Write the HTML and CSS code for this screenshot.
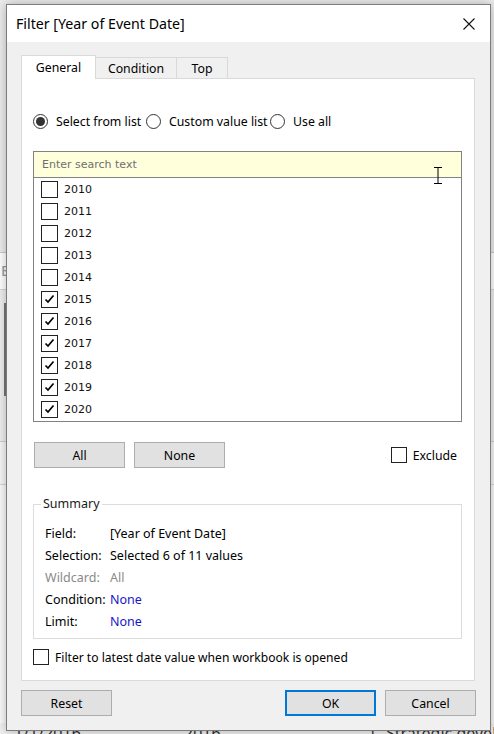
FILE: index.html
```html
<!DOCTYPE html>
<html lang="en">
<head>
<meta charset="utf-8">
<title>Filter [Year of Event Date]</title>
<link rel="stylesheet" href="styles.css">
</head>
<body>
<div class="app">
  <div class="band band-top"></div>
  <div class="band band-row"><span class="cut">E</span></div>
  <div class="band band-mid"><span class="bar"></span></div>
  <div class="band band-row2"></div>
  <div class="band band-low"></div>
  <div class="app-grid">
    <span>1/1/2016</span><span>2016</span><span class="num">1</span><span>Strategic development</span>
  </div>
</div>

<div class="dialog">
  <div class="titlebar">
    <span class="title">Filter [Year of Event Date]</span>
    <svg class="close" width="12" height="12" viewBox="0 0 12 12"><path d="M0.5 0.5 L11.5 11.5 M11.5 0.5 L0.5 11.5" stroke="#111" stroke-width="1.1" fill="none"/></svg>
  </div>
  <div class="client">
    <div class="tabs">
      <div class="tab active">General</div>
      <div class="tab">Condition</div>
      <div class="tab tab-top">Top</div>
    </div>
    <div class="panel">
      <div class="radios">
        <label class="radio r1"><span class="dot on"></span>Select from list</label>
        <label class="radio r2"><span class="dot"></span>Custom value list</label>
        <label class="radio"><span class="dot"></span>Use all</label>
      </div>
      <div class="listbox">
        <div class="search">
          <span>Enter search text</span>
          <svg class="ibeam" width="8" height="17" viewBox="0 0 8 17"><path d="M0 0.5 H8 M4 1 V16 M0 16.5 H8" stroke="#000" stroke-width="1" fill="none"/></svg>
        </div>
        <div class="items">
          <div class="item"><span class="cb"></span>2010</div>
          <div class="item"><span class="cb"></span>2011</div>
          <div class="item"><span class="cb"></span>2012</div>
          <div class="item"><span class="cb"></span>2013</div>
          <div class="item"><span class="cb"></span>2014</div>
          <div class="item"><span class="cb"><svg width="15" height="15" viewBox="0 0 15 15"><path d="M3.5 7.5 L6 10 L11.5 3.5" stroke="#000" stroke-width="1.7" fill="none"/></svg></span>2015</div>
          <div class="item"><span class="cb"><svg width="15" height="15" viewBox="0 0 15 15"><path d="M3.5 7.5 L6 10 L11.5 3.5" stroke="#000" stroke-width="1.7" fill="none"/></svg></span>2016</div>
          <div class="item"><span class="cb"><svg width="15" height="15" viewBox="0 0 15 15"><path d="M3.5 7.5 L6 10 L11.5 3.5" stroke="#000" stroke-width="1.7" fill="none"/></svg></span>2017</div>
          <div class="item"><span class="cb"><svg width="15" height="15" viewBox="0 0 15 15"><path d="M3.5 7.5 L6 10 L11.5 3.5" stroke="#000" stroke-width="1.7" fill="none"/></svg></span>2018</div>
          <div class="item"><span class="cb"><svg width="15" height="15" viewBox="0 0 15 15"><path d="M3.5 7.5 L6 10 L11.5 3.5" stroke="#000" stroke-width="1.7" fill="none"/></svg></span>2019</div>
          <div class="item"><span class="cb"><svg width="15" height="15" viewBox="0 0 15 15"><path d="M3.5 7.5 L6 10 L11.5 3.5" stroke="#000" stroke-width="1.7" fill="none"/></svg></span>2020</div>
        </div>
      </div>
      <div class="btnrow">
        <button class="btn">All</button>
        <button class="btn">None</button>
        <label class="exclude"><span class="cb small"></span>Exclude</label>
      </div>
      <fieldset class="summary">
        <legend>Summary</legend>
        <div class="sgrid">
          <span>Field:</span><span>[Year of Event Date]</span>
          <span>Selection:</span><span>Selected 6 of 11 values</span>
          <span class="dim">Wildcard:</span><span class="dim">All</span>
          <span>Condition:</span><span class="link">None</span>
          <span>Limit:</span><span class="link">None</span>
        </div>
      </fieldset>
      <label class="latest"><span class="cb small"></span>Filter to latest date value when workbook is opened</label>
    </div>
    <div class="footer">
      <button class="btn">Reset</button>
      <span class="spacer"></span>
      <button class="btn default">OK</button>
      <button class="btn">Cancel</button>
    </div>
  </div>
</div>
</body>
</html>
```

FILE: styles.css
```css
* { box-sizing: border-box; }
html, body { margin: 0; padding: 0; }
body {
  width: 494px;
  height: 734px;
  overflow: hidden;
  position: relative;
  background: #f0f0f0;
  font-family: "Noto Sans", "Open Sans", sans-serif;
  font-size: 12.3px;
  color: #000;
}

/* background application */
.app {
  display: flex;
  flex-direction: column;
  height: 734px;
}
.band { flex: none; position: relative; }
.band-top { height: 253px; background: #ececec; border-bottom: 1px solid #c9c9c9; }
.band-row { height: 37px; background: #ffffff; border-bottom: 1px solid #d6d6d6; }
.cut { position: absolute; left: 1px; top: 7px; font-size: 15px; color: #9a9a9a; }
.band-mid { height: 152px; background: #efefef; border-bottom: 1px solid #d0d0d0; }
.bar { position: absolute; left: 4px; top: 13px; width: 2px; height: 93px; background: #77777a; }
.band-row2 { height: 43px; background: #f7f7f7; border-bottom: 1px solid #d6d6d6; }
.band-low { height: 238px; background: #fafafa; }
.app-grid {
  display: grid;
  grid-template-columns: 170px 170px 32px 1fr;
  padding-left: 14px;
  font-size: 16px;
  line-height: 20px;
  color: #333;
  white-space: nowrap;
}
.app-grid .num { text-align: right; padding-right: 9px; }

/* dialog */
.dialog {
  position: absolute;
  left: 6px;
  top: 4px;
  width: 485px;
  height: 727px;
  border: 1px solid #7c7c7c;
  background: #f0f0f0;
  box-shadow: 0 0 10px rgba(0, 0, 0, 0.28);
  display: flex;
  flex-direction: column;
}
.titlebar {
  height: 37px;
  flex: none;
  background: #fff;
  display: flex;
  align-items: center;
  padding: 0 15px 0 9px;
}
.title { font-size: 14.2px; flex: 1; padding-bottom: 1px; }
.close { display: block; margin-top: 1px; }

.client {
  flex: 1;
  display: flex;
  flex-direction: column;
  padding: 13px 14px 14px 14px;
}

.tabs {
  display: flex;
  align-items: flex-end;
  height: 23px;
  position: relative;
  z-index: 2;
}
.tab {
  height: 21px;
  border: 1px solid #d9d9d9;
  border-bottom: none;
  background: #f0f0f0;
  display: flex;
  align-items: center;
  justify-content: center;
  width: 82px;
  margin-left: -1px;
  padding-top: 1px;
}
.tab.active {
  width: 75px;
  height: 24px;
  margin-left: 0;
  margin-bottom: -1px;
  background: #fff;
  position: relative;
  z-index: 3;
  padding-top: 0;
  padding-bottom: 1px;
}
.tab-top { width: 52px; }

.panel {
  width: 454px;
  background: #fff;
  border: 1px solid #d9d9d9;
  display: flex;
  flex-direction: column;
  padding: 0 12px 15px 11px;
}

.radios {
  display: flex;
  align-items: center;
  height: 15px;
  margin-top: 35px;
}
.radio { display: flex; align-items: center; white-space: nowrap; }
.r1 { width: 113px; }
.r2 { width: 124px; }
.dot {
  width: 15px;
  height: 15px;
  border-radius: 50%;
  border: 1px solid #333;
  margin-right: 8px;
  display: flex;
  align-items: center;
  justify-content: center;
  flex: none;
}
.dot.on::after {
  content: "";
  width: 9px;
  height: 9px;
  border-radius: 50%;
  background: #333;
}

.listbox {
  margin-top: 22px;
  width: 429px;
  font-family: "DejaVu Sans", "Noto Sans", sans-serif;
  font-size: 11px;
}
.search {
  height: 27px;
  background: #ffffdc;
  border: 1px solid #828282;
  display: flex;
  align-items: center;
  padding: 0 0 1px 8px;
  color: #6f6f6f;
  position: relative;
}
.ibeam { position: absolute; left: 400px; top: 15px; }
.items {
  border: 1px solid #828282;
  border-top: none;
  padding-bottom: 1px;
}
.item {
  height: 22px;
  display: flex;
  align-items: center;
  padding-left: 7px;
  padding-top: 1px;
  color: #111;
}
.cb {
  width: 17px;
  height: 17px;
  border: 1px solid #222;
  background: #fff;
  margin-right: 6px;
  flex: none;
  display: flex;
  align-items: center;
  justify-content: center;
}
.cb svg { display: block; }
.cb.small { width: 16px; height: 16px; }

.btnrow {
  margin-top: 20px;
  margin-left: 1px;
  height: 26px;
  display: flex;
  align-items: center;
}
.btn {
  width: 91px;
  height: 26px;
  background: #e1e1e1;
  border: 1px solid #adadad;
  font-family: "Noto Sans", "Open Sans", sans-serif;
  font-size: 12.3px;
  color: #000;
  padding: 0 0 0 0;
  margin: 0;
  border-radius: 0;
}
.btnrow .btn + .btn { margin-left: 9px; }
.exclude {
  margin-left: auto;
  margin-right: 5px;
  display: flex;
  align-items: center;
}
.exclude .cb { margin-right: 6px; }

.summary {
  margin: 28px 0 0 0;
  width: 429px;
  border: 1px solid #dcdcdc;
  padding: 10px 11px 6px 11px;
  min-width: 0;
  font-size: 12.5px;
}
.summary legend {
  padding: 0 2px;
  margin-left: -4px;
  line-height: 16px;
  color: #1a1a1a;
}
.sgrid {
  display: grid;
  grid-template-columns: 65px 1fr;
  grid-auto-rows: 22px;
  align-items: center;
  white-space: nowrap;
}
.dim { color: #8a8a8a; }
.link { color: #1616c8; }

.latest {
  margin-top: 10px;
  display: flex;
  align-items: center;
  height: 16px;
  font-size: 12.1px;
}

.footer {
  margin-top: 9px;
  display: flex;
  align-items: center;
}
.spacer { flex: 1; }
.footer .btn.default {
  border: 2px solid #0078d7;
  margin-right: 9px;
}
```
